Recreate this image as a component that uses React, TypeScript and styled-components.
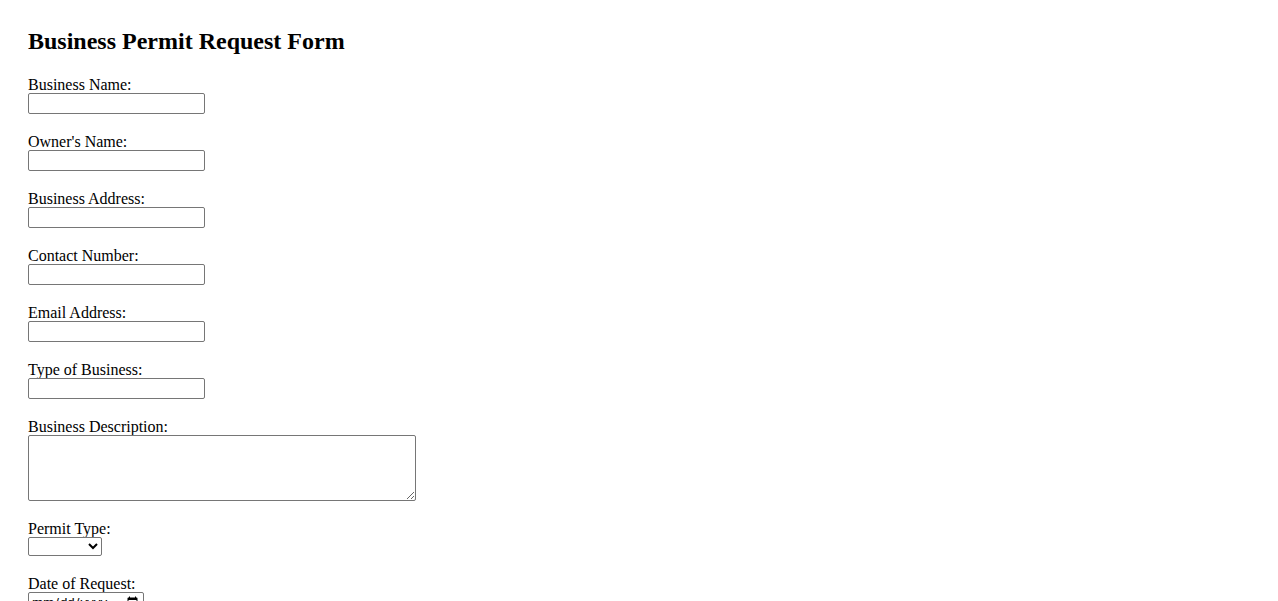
import React from 'react';
import styled, { createGlobalStyle } from 'styled-components';

const GlobalStyle = createGlobalStyle`
  body {
    margin: 8px;
    font-family: "Liberation Serif", "Times New Roman", serif;
    font-size: 16px;
    color: #000000;
    background: #ffffff;
  }
`;

const StyledPage = styled.div`
  padding: 20px;
`;

const StyledTitle = styled.h2`
  margin: 0 0 20px;
  font-size: 24px;
  font-weight: bold;
  line-height: 27px;
`;

const StyledForm = styled.form`
  display: flex;
  flex-direction: column;
  align-items: flex-start;
  gap: 18px;
`;

const StyledField = styled.div`
  display: flex;
  flex-direction: column;
  align-items: flex-start;
`;

const StyledLabel = styled.label`
  display: block;
  box-sizing: border-box;
  height: 18px;
  padding-top: 1px;
  line-height: 18px;
`;

const controlBase = `
  box-sizing: border-box;
  margin: 0;
  border: 1px solid #767676;
  border-radius: 2px;
  background: #ffffff;
  font-family: "Liberation Sans", Arial, sans-serif;
  font-size: 13.33px;
  color: #000000;
`;

const StyledInput = styled.input<{ $width?: number }>`
  ${controlBase}
  width: ${(p) => p.$width ?? 177}px;
  height: 21px;
  padding: 1px 2px;
`;

const StyledTextArea = styled.textarea`
  ${controlBase}
  width: 388px;
  height: 66px;
  padding: 2px;
  font-family: "Liberation Mono", monospace;
`;

const StyledSelect = styled.select`
  ${controlBase}
  width: 74px;
  height: 19px;
  padding: 0;
`;

const textFields = [
  { id: 'businessName', label: 'Business Name:' },
  { id: 'ownerName', label: "Owner's Name:" },
  { id: 'businessAddress', label: 'Business Address:' },
  { id: 'contactNumber', label: 'Contact Number:' },
  { id: 'email', label: 'Email Address:' },
  { id: 'businessType', label: 'Type of Business:' },
];

const App: React.FunctionComponent = () => (
  <StyledPage>
    <GlobalStyle />
    <StyledTitle>Business Permit Request Form</StyledTitle>
    <StyledForm>
      {textFields.map((f) => (
        <StyledField key={f.id}>
          <StyledLabel htmlFor={f.id}>{f.label}</StyledLabel>
          <StyledInput id={f.id} type="text" />
        </StyledField>
      ))}
      <StyledField>
        <StyledLabel htmlFor="description">Business Description:</StyledLabel>
        <StyledTextArea id="description" />
      </StyledField>
      <StyledField>
        <StyledLabel htmlFor="permitType">Permit Type:</StyledLabel>
        <StyledSelect id="permitType" defaultValue="">
          <option value=""></option>
          <option value="new">New</option>
          <option value="renewal">Renewal</option>
        </StyledSelect>
      </StyledField>
      <StyledField>
        <StyledLabel htmlFor="requestDate">Date of Request:</StyledLabel>
        <StyledInput id="requestDate" type="date" $width={116} />
      </StyledField>
    </StyledForm>
  </StyledPage>
);

export default App;
